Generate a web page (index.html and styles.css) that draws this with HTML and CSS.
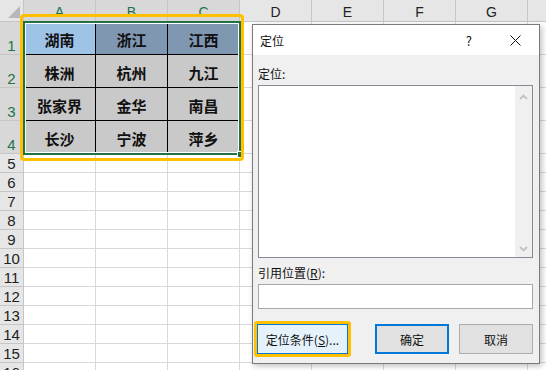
FILE: index.html
```html
<!DOCTYPE html>
<html lang="zh">
<head>
<meta charset="UTF-8" />
<title>定位</title>
<link rel="stylesheet" href="styles.css">
</head>
<body>

<div class="sheet" id="sheet"></div>

<!-- selection + highlight -->
<div class="sel-box"></div>
<div class="fill-handle"></div>
<div class="mark-box"></div>

<!-- 定位 dialog -->
<div class="dialog">
  <div class="titlebar">
    <span class="title">定位</span>
    <span class="help">?</span>
    <svg class="close" width="11" height="11" viewBox="0 0 11 11">
      <path d="M0.5 0.5 L10.5 10.5 M10.5 0.5 L0.5 10.5" stroke="#111" stroke-width="1" fill="none"/>
    </svg>
  </div>
  <div class="dlg-body">
    <div class="label">定位:</div>
    <div class="listbox">
      <div class="list-area"></div>
      <div class="scroll">
        <svg width="9" height="6" viewBox="0 0 9 6"><path d="M1 5 L4.5 1.5 L8 5" stroke="#c2c2c2" stroke-width="1.8" fill="none"/></svg>
        <svg width="9" height="6" viewBox="0 0 9 6"><path d="M1 1 L4.5 4.5 L8 1" stroke="#c2c2c2" stroke-width="1.8" fill="none"/></svg>
      </div>
    </div>
    <div class="label label-ref">引用位置(<u>R</u>):</div>
    <div class="ref-input"></div>
    <div class="buttons">
      <span class="ring"><button class="btn btn-special">定位条件(<u>S</u>)...</button></span>
      <button class="btn btn-ok">确定</button>
      <button class="btn">取消</button>
    </div>
  </div>
</div>

<script>
  // 表格
  const sheet = document.getElementById('sheet');
  const cols = ['A','B','C','D','E','F','G',''];
  const data = [
    ['湖南','浙江','江西'],
    ['株洲','杭州','九江'],
    ['张家界','金华','南昌'],
    ['长沙','宁波','萍乡']
  ];

  function add(cls, text) {
    const d = document.createElement('div');
    d.className = cls;
    if (text) d.textContent = text;
    sheet.appendChild(d);
    return d;
  }

  add('corner').innerHTML = '<span class="tri"></span>';
  cols.forEach((c, i) => add(i < 3 ? 'colhead on' : 'colhead', c));

  for (let r = 1; r <= 16; r++) {
    add(r <= 4 ? 'rowhead on' : 'rowhead', String(r));
    for (let c = 0; c < 8; c++) {
      if (r <= 4 && c < 3) {
        let cls = 'cell data';
        if (r === 1) cls += c === 0 ? ' light' : ' dark';
        add(cls, data[r - 1][c]);
      } else {
        add('cell');
      }
    }
  }
</script>

</body>
</html>
```

FILE: styles.css
```css
body {
  margin: 0;
  width: 546px;
  height: 370px;
  overflow: hidden;
  position: relative;
  background: #fff;
  font-family: "Liberation Sans", "Noto Sans CJK SC", sans-serif;
}
.sheet {
  display: grid;
  grid-template-columns: 24px repeat(8, 72px);
  grid-template-rows: 22px repeat(4, 33px) repeat(12, 19px);
  width: 600px;
}
.sheet > div {
  box-sizing: border-box;
  border-right: 1px solid #d9d9d9;
  border-bottom: 1px solid #d9d9d9;
}
.corner {
  background: #e6e6e6;
  position: relative;
  border-color: #c6c6c6 !important;
}
.tri {
  position: absolute;
  right: 3px;
  bottom: 3px;
  width: 0;
  height: 0;
  border-left: 12px solid transparent;
  border-bottom: 12px solid #b8b8b8;
}
.colhead {
  background: #e6e6e6;
  border-color: #c6c6c6 !important;
  color: #222;
  font-size: 14px;
  display: flex;
  align-items: flex-end;
  justify-content: center;
  line-height: 18px;
}
.rowhead {
  background: #e6e6e6;
  border-color: #c6c6c6 !important;
  color: #222;
  font-size: 15px;
  display: flex;
  align-items: flex-end;
  justify-content: center;
  line-height: 17px;
}
.colhead.on, .rowhead.on {
  background: #d8d8d8;
  color: #217346;
}
.cell.data {
  background: #c9c9c9;
  border-color: #000;
  display: flex;
  align-items: center;
  justify-content: center;
  padding-top: 2px;
  font-family: "Noto Sans CJK SC", sans-serif;
  font-weight: bold;
  font-size: 15px;
  color: #111;
}
.cell.light { background: #9dc3e6; }
.cell.dark { background: #8097b1; }

.sel-box {
  position: absolute;
  left: 23px;
  top: 21px;
  width: 218px;
  height: 134px;
  box-sizing: border-box;
  border: 2px solid #217346;
  box-shadow: inset 0 0 0 1px #fff;
}
.fill-handle {
  position: absolute;
  left: 237px;
  top: 151px;
  width: 5px;
  height: 5px;
  background: #217346;
  border: 1px solid #fff;
}
.mark-box {
  position: absolute;
  left: 20px;
  top: 14px;
  width: 224px;
  height: 147px;
  box-sizing: border-box;
  border: 3px solid #ffc000;
  border-radius: 4px;
}

/* dialog */
.dialog {
  position: absolute;
  left: 252px;
  top: 24px;
  width: 288px;
  height: 340px;
  box-sizing: border-box;
  border: 1px solid #7a7a7a;
  background: #f0f0f0;
  box-shadow: 2px 2px 6px rgba(0, 0, 0, 0.25);
  font-family: "Noto Sans CJK SC", sans-serif;
  font-size: 12px;
  color: #111;
}
.titlebar {
  height: 30px;
  background: #fff;
  display: flex;
  align-items: center;
  padding: 0 18px 0 7px;
}
.title { flex: 1; }
.help { margin-right: 38px; font-size: 13px; }
.dlg-body {
  padding: 10px 6px 0 5px;
}
.label {
  line-height: 17px;
  height: 17px;
}
.label-ref { margin-top: 6px; }
.listbox {
  margin-top: 3px;
  height: 173px;
  box-sizing: border-box;
  border: 1px solid #868a94;
  display: flex;
  background: #fff;
}
.list-area { flex: 1; }
.scroll {
  width: 17px;
  background: #f0f0f0;
  display: flex;
  flex-direction: column;
  justify-content: space-between;
  align-items: center;
  padding: 8px 0 5px;
}
.ref-input {
  margin-top: 3px;
  height: 25px;
  box-sizing: border-box;
  border: 1px solid #a8a8a8;
  background: #fff;
}
.buttons {
  margin-top: 12px;
  display: flex;
  align-items: center;
  gap: 10px;
  height: 36px;
}
.ring {
  margin-left: -4px;
  border: 3px solid #ffc000;
  border-radius: 3px;
  display: flex;
}
.btn {
  height: 30px;
  width: 74px;
  margin: 0;
  padding: 0;
  box-sizing: border-box;
  border: 1px solid #adadad;
  background: #e1e1e1;
  font-family: "Noto Sans CJK SC", sans-serif;
  font-size: 12px;
  color: #111;
}
.btn-special {
  width: 91px;
  background: #e5f1fb;
  border-color: #0078d7;
}
.btn-ok {
  margin-left: auto;
  border: 2px solid #0078d7;
}
```
